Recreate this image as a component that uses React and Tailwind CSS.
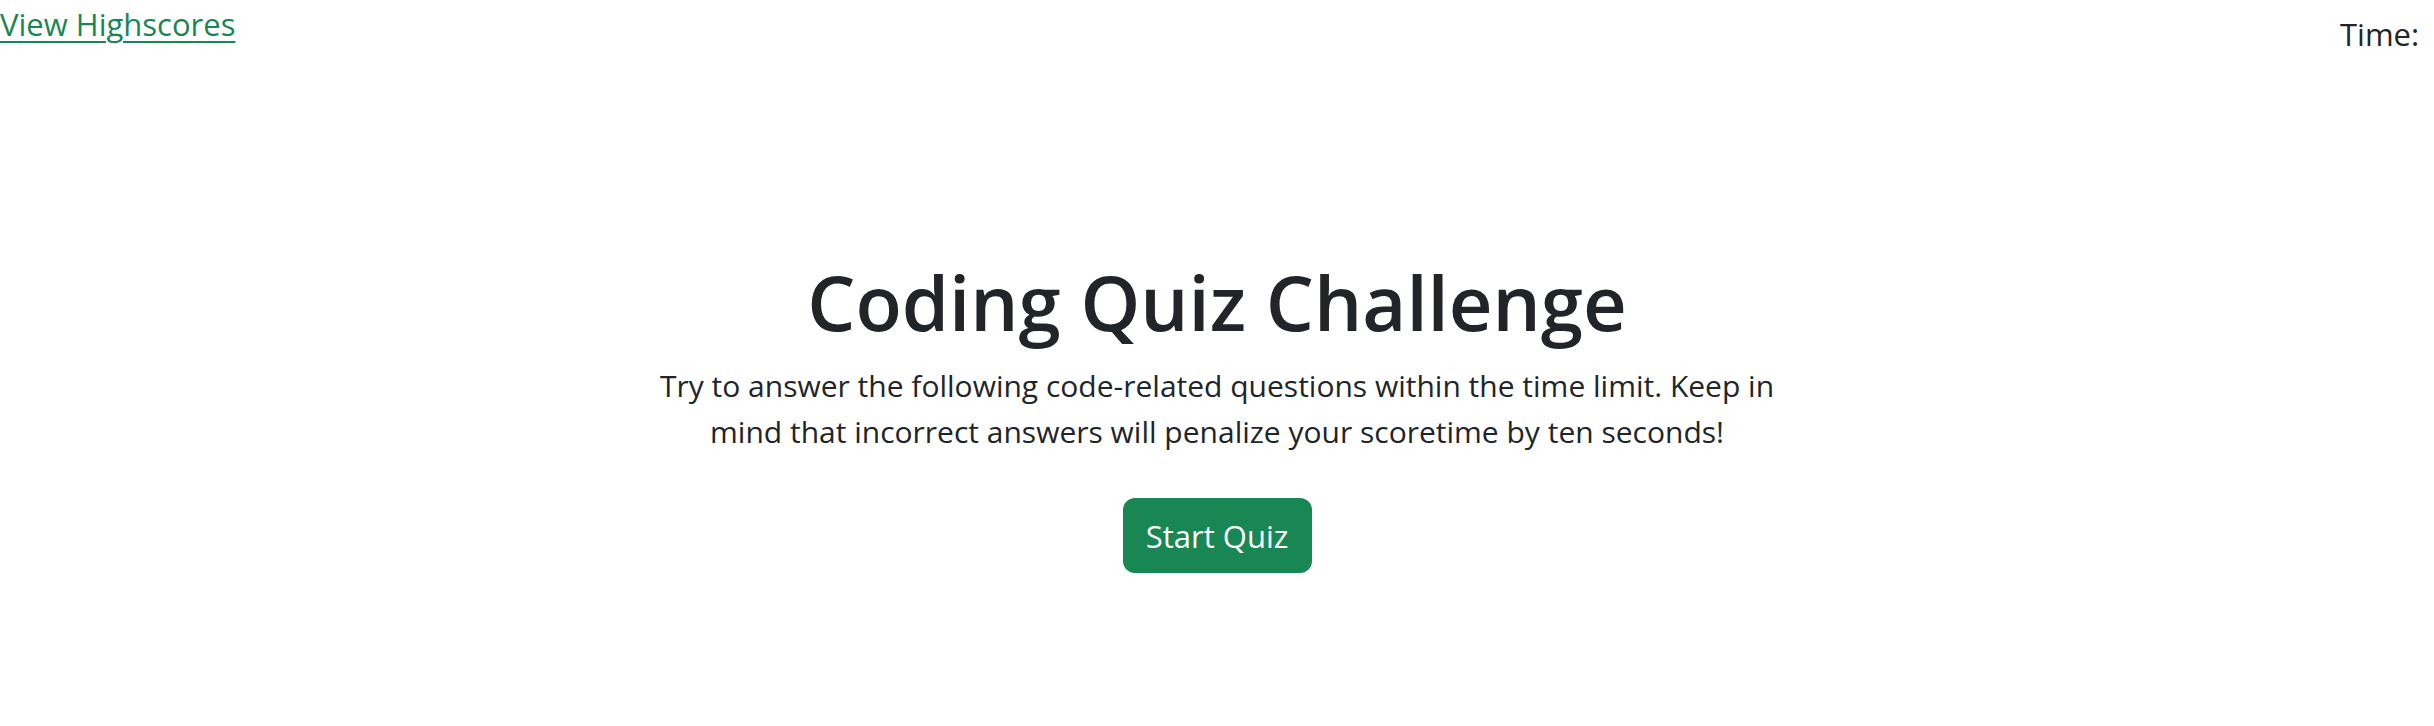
export default function App() {
  return (
    <div
      className="min-h-screen w-full overflow-hidden bg-white text-[#212529]"
      style={{ fontFamily: '"Open Sans", "Noto Sans", sans-serif' }}
    >
      <header className="flex items-start justify-between">
        <a href="#" className="text-[31px] leading-[48px] text-[#198754] underline decoration-[2px] underline-offset-[5px]">
          View Highscores
        </a>
        <div className="mt-[10px] w-[94px] shrink-0 whitespace-nowrap text-[31px] leading-[48px]">
          Time: <span className="ml-[6px]">75</span>
        </div>
      </header>

      <main className="mt-[196px] flex flex-col items-center text-center">
        <h1 className="text-[76px] font-semibold leading-[96px]">Coding Quiz Challenge</h1>
        <p className="mt-[13px] max-w-[1150px] text-[30px] leading-[46px]">
          Try to answer the following code-related questions within the time limit. Keep in mind that
          incorrect answers will penalize your scoretime by ten seconds!
        </p>
        <button className="mt-[43px] h-[75px] w-[189px] rounded-[12px] bg-[#198754] text-[31px] leading-[48px] text-white">
          Start Quiz
        </button>
      </main>
    </div>
  );
}
